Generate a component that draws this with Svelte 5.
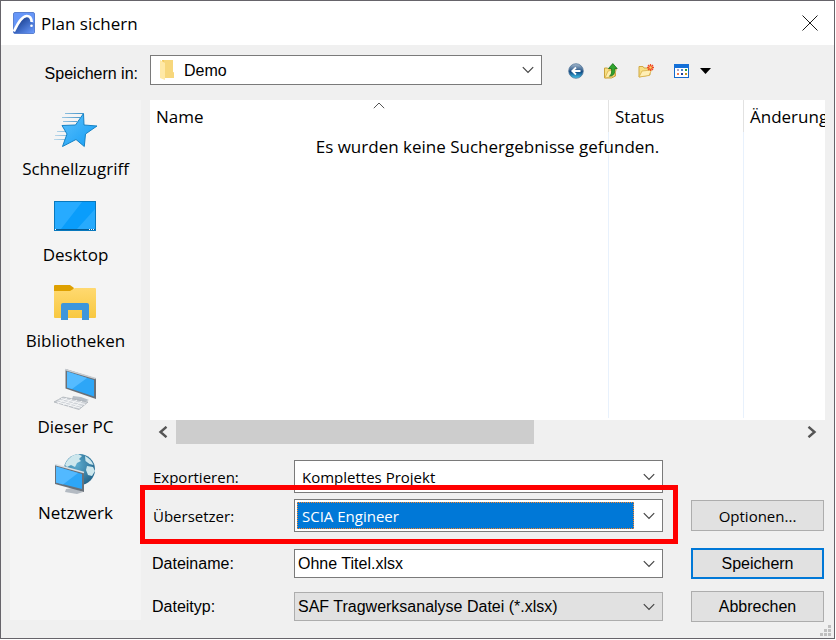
<script lang="ts">
    const places = [
        { id: "quick", label: "Schnellzugriff" },
        { id: "desktop", label: "Desktop" },
        { id: "libraries", label: "Bibliotheken" },
        { id: "pc", label: "Dieser PC" },
        { id: "network", label: "Netzwerk" },
    ];

    let fileName = $state("Ohne Titel.xlsx");

    // horizontal scroll extent of the file list
    const visibleWidth = 675;
    const contentWidth = 1175;
    const thumbWidth = $derived((visibleWidth / contentWidth) * 100);
</script>

{#snippet chevron()}
    <svg class="chevron" width="12" height="8" viewBox="0 0 12 8" aria-hidden="true">
        <path d="M.8 1.2 6 6.4l5.2-5.2" fill="none" stroke="#444" stroke-width="1.2" />
    </svg>
{/snippet}

<main class="dialog">
    <header class="titlebar">
        <svg width="22" height="22" viewBox="0 0 22 22" aria-hidden="true">
            <defs>
                <linearGradient id="logo" x1=".2" y1=".2" x2="1" y2="1">
                    <stop offset="0" stop-color="#1d3f8c" />
                    <stop offset=".35" stop-color="#3560b8" />
                    <stop offset="1" stop-color="#6c9cff" />
                </linearGradient>
            </defs>
            <rect x=".5" y=".5" width="21" height="21" rx="1.5" fill="#6696f8" stroke="#5a80d0" />
            <path d="M1 20C4 13 8 5 13.500 4.500c3.500 0 4.700 3 5 6L21 11v10H1z" fill="url(#logo)" />
            <path d="M.8 19.500C4 13 8 4.500 13.500 4c3.500-.2 5 3 5.200 6" fill="none" stroke="#fff" stroke-width="2.6" />
            <circle cx="18.500" cy="13.700" r="1.300" fill="#fff" />
        </svg>
        <h1>Plan sichern</h1>
        <button class="close" aria-label="Schließen">
            <svg width="16" height="16" viewBox="0 0 16 16">
                <path d="M.5.5l15 15M15.500.5l-15 15" stroke="#000" stroke-width=".9" />
            </svg>
        </button>
    </header>

    <div class="toolbar">
        <label class="arial" for="folder">Speichern in:</label>
        <div class="combo folder">
            <select id="folder" class="arial">
                <option>Demo</option>
            </select>
            <svg class="folder-icon" width="16" height="22" viewBox="0 0 16 22" aria-hidden="true">
                <path d="M3 1h11v12l1 1v5H3z" fill="#f3cb62" />
                <path d="M5 1h9v12l1 1v5H5z" fill="#f7d77c" />
                <path d="M1 1l5 3v17l-5-2z" fill="#ffe9a6" />
            </svg>
            {@render chevron()}
        </div>
        <div class="tools">
            <button aria-label="Zurück">
                <svg width="16" height="16" viewBox="0 0 16 16">
                    <defs>
                        <linearGradient id="orb" x1="0" y1="0" x2="0" y2="1">
                            <stop offset="0" stop-color="#a9bccf" />
                            <stop offset=".45" stop-color="#36618f" />
                            <stop offset=".55" stop-color="#0d4681" />
                            <stop offset="1" stop-color="#45c8ee" />
                        </linearGradient>
                    </defs>
                    <circle cx="8" cy="8" r="7.300" fill="url(#orb)" stroke="#54779b" stroke-width=".8" />
                    <path d="M12.500 8H5M8 4.500 4.300 8 8 11.500" fill="none" stroke="#fff" stroke-width="1.800" />
                </svg>
            </button>
            <button aria-label="Eine Ebene nach oben">
                <svg width="16" height="16" viewBox="0 0 16 16">
                    <path d="M1.500 5h3l1 1h7v7l-4 2h-7z" fill="#f7df83" stroke="#c9a23b" />
                    <path d="M2 15l3-7 8.500-2-2.500 7z" fill="#ffeeae" stroke="#d8b14a" stroke-width=".8" />
                    <path d="M6.500 13c2.500-1.500 2.300-4 2-7.500H5.500L9.800.6l4.400 4.900h-2.400c.3 4.500-1 7.500-5.300 7.500z" fill="#31a52e" stroke="#157016" stroke-width=".8" />
                </svg>
            </button>
            <button aria-label="Neuen Ordner erstellen">
                <svg width="16" height="16" viewBox="0 0 16 16">
                    <path d="M1 14V3.500h4l1 1.500h6v7z" fill="#f7df83" stroke="#d0a944" />
                    <path d="M1 14l3-6 9.500-1-2.500 5.500z" fill="#ffefb5" stroke="#d8b14a" stroke-width=".8" />
                    <path d="M12.500 1v7M9 4.500h7M10 2l5 5M15 2l-5 5" stroke="#ef4c25" stroke-width="1.300" />
                    <circle cx="12.500" cy="4.500" r="1.200" fill="#ffcf5c" />
                </svg>
            </button>
            <button aria-label="Ansichtsmenü">
                <svg width="38" height="16" viewBox="0 0 38 16">
                    <rect x="1.500" y="1.500" width="14" height="13" fill="#fff" stroke="#1168cd" />
                    <path d="M1 1h15v4H1z" fill="#1470d8" />
                    <path d="M4 6h2v2H4z" fill="#a8a3c5" />
                    <path d="M8 6h2v2H8z" fill="#4c83cc" />
                    <path d="M12 6h2v2h-2z" fill="#2d9a3a" />
                    <path d="M4 10h2v2H4z" fill="#f07a50" />
                    <path d="M8 10h2v2H8z" fill="#1c3f9a" />
                    <path d="M12 10h2v2h-2z" fill="#c4971e" />
                    <path d="M27 5h11l-5.500 6z" fill="#000" />
                </svg>
            </button>
        </div>
    </div>

    <div class="body">
        <nav class="places">
            {#each places as place}
                <button class="place">
                    <svg width="44" height="44" viewBox="1 0 44 44" aria-hidden="true">
                        {#if place.id === "quick"}
                            <defs>
                                <linearGradient id="star" x1="0" y1="0" x2="1" y2="1">
                                    <stop offset="0" stop-color="#5cc0fb" />
                                    <stop offset="1" stop-color="#139df5" />
                                </linearGradient>
                                <linearGradient id="trail" x1="0" y1="0" x2="30" y2="0" gradientUnits="userSpaceOnUse">
                                    <stop offset="0" stop-color="#c3dcec" />
                                    <stop offset="1" stop-color="#3f92c8" />
                                </linearGradient>
                            </defs>
                            <path d="M12 5.500h18M9 9.500h18M10 13.500h14M4 23.500h12M2 27.500h12M1 31.500h13" stroke="url(#trail)" />
                            <path d="M30.500 5.500 31 17l13 1-11.500 8-1.200 12.500-8.300-7L9.500 38.500l4.500-12.500-5-8.500 13.500-.5z" fill="url(#star)" stroke="#1682c5" />
                        {:else if place.id === "desktop"}
                            <rect x="1.500" y="7.500" width="41" height="29" fill="#0a9dfb" stroke="#0878bd" />
                            <path d="M2 8h27L8 35H2z" fill="#27abff" />
                            <path d="M42 15v20H24z" fill="#3bb3ff" opacity=".6" />
                            <path d="M2 35.500h40" stroke="#075c96" />
                            <path d="M2 35.500h1M36 35.500h1M38 35.500h1M40 35.500h1" stroke="#fff" />
                        {:else if place.id === "libraries"}
                            <defs>
                                <linearGradient id="lib" x1="0" y1="0" x2="0" y2="1">
                                    <stop offset="0" stop-color="#ffd970" />
                                    <stop offset="1" stop-color="#f8c840" />
                                </linearGradient>
                            </defs>
                            <path d="M1 6q0-1 1-1h15l4 3-2 4H1z" fill="#dea000" />
                            <path d="M1 11h16l5-3h20q1 0 1 1v28q0 1-1 1H2q-1 0-1-1z" fill="url(#lib)" />
                            <path d="M8 40V25q0-2 2-2h24q2 0 2 2v15h-7V30H15v10z" fill="#3d96dc" />
                        {:else if place.id === "pc"}
                            <path d="M20 30l8 1 8 3-5 2-12-3z" fill="#b7bec6" />
                            <path d="M12.500 3 43 12.500V33L12.500 22.500z" fill="#6a7077" />
                            <path d="M12 3.500 42.500 12.500" stroke="#c9ced3" stroke-width="1.500" />
                            <path d="M14 5.500l27 8.500v16.500L14 21.500z" fill="#2da6f7" />
                            <path d="M14 5.500l20 6.500-15 11-5-1.500z" fill="#55bbff" />
                            <path d="M10 31l25 5-9 7.500L1 36z" fill="#d0d4d9" stroke="#9ca2aa" stroke-width=".6" />
                            <path d="M8 32.500l24 6M5.500 34l23.500 6.500M4 36l23 6M14 32l-9 5.500M19 33l-9 6M24 34l-9 6.500M29 35l-8.500 6.500" stroke="#f7f8f9" stroke-width=".9" />
                        {:else}
                            <defs>
                                <radialGradient id="globe" cx=".4" cy=".35" r=".75">
                                    <stop offset="0" stop-color="#5cadd0" />
                                    <stop offset="1" stop-color="#1f5f85" />
                                </radialGradient>
                            </defs>
                            <circle cx="26.500" cy="17.500" r="15.500" fill="url(#globe)" />
                            <path d="M12 13c2-6 7-10 13-11l4 2-3 3 2 2-4 2-2 4-4-2-4 2zM32 4c4 2 7 5 8.500 9l-4-1-4-3zM34 14l6 1 2 4-3 5-4-1-2-5z" fill="#cde7ed" />
                            <path d="M13 37l7-1 10 4-6 2-12-2z" fill="#b3bac2" />
                            <path d="M2 12.500 31 20.500V40L2 32z" fill="#68717a" />
                            <path d="M2 12.500 31 20.500" stroke="#dbe0e4" stroke-width="1.500" />
                            <path d="M3 14.500l26 7.500v15L3 30.500z" fill="#2da6f7" />
                            <path d="M3 14.500l22 6.500L10 32.500l-7-2z" fill="#52b9ff" />
                        {/if}
                    </svg>
                    <span>{place.label}</span>
                </button>
            {/each}
        </nav>

        <div class="content">
            <div class="list">
                <table>
                    <thead>
                        <tr>
                            <th class="name">Name</th>
                            <th class="status">Status</th>
                            <th>Änderung</th>
                        </tr>
                    </thead>
                    <tbody>
                        <tr><td></td><td></td><td></td></tr>
                    </tbody>
                </table>
                <svg class="sort" width="12" height="7" viewBox="0 0 12 7" aria-hidden="true">
                    <path d="M.8 6.200 6 1l5.200 5.200" fill="none" stroke="#555" />
                </svg>
                <p class="empty">Es wurden keine Suchergebnisse gefunden.</p>
            </div>
            <div class="scrollbar">
                <button aria-label="Nach links">
                    <svg width="10" height="12" viewBox="0 0 10 12">
                        <path d="M8.500.8 2.500 6l6 5.200" fill="none" stroke="#555" stroke-width="2.400" />
                    </svg>
                </button>
                <div class="track">
                    <div class="thumb" style="width: {thumbWidth}%"></div>
                </div>
                <button aria-label="Nach rechts">
                    <svg width="10" height="12" viewBox="0 0 10 12">
                        <path d="M1.500.8l6 5.200-6 5.200" fill="none" stroke="#555" stroke-width="2.400" />
                    </svg>
                </button>
            </div>

            <form class="form" onsubmit={(e) => e.preventDefault()}>
                <div class="row">
                    <label for="scope">Exportieren:</label>
                    <div class="combo">
                        <select id="scope">
                            <option>Komplettes Projekt</option>
                        </select>
                        {@render chevron()}
                    </div>
                </div>
                <div class="row translator">
                    <label for="translator">Übersetzer:</label>
                    <div class="combo selected">
                        <select id="translator">
                            <option>SCIA Engineer</option>
                        </select>
                        {@render chevron()}
                    </div>
                    <button type="button" class="btn">Optionen...</button>
                    <div class="highlight"></div>
                </div>
                <div class="row file arial">
                    <label for="filename">Dateiname:</label>
                    <div class="combo">
                        <input id="filename" type="text" bind:value={fileName} />
                        {@render chevron()}
                    </div>
                    <button type="submit" class="btn primary">Speichern</button>
                </div>
                <div class="row file arial">
                    <label for="filetype">Dateityp:</label>
                    <div class="combo gray">
                        <select id="filetype">
                            <option>SAF Tragwerksanalyse Datei (*.xlsx)</option>
                        </select>
                        {@render chevron()}
                    </div>
                    <button type="button" class="btn">Abbrechen</button>
                </div>
            </form>
        </div>
    </div>

    <svg class="grip" width="12" height="12" viewBox="0 0 12 12" aria-hidden="true">
        <path d="M8 0h3v3H8zM4 4h3v3H4zM8 4h3v3H8zM0 8h3v3H0zM4 8h3v3H4zM8 8h3v3H8z" fill="#bfbfbf" />
    </svg>
</main>

<style>
    :global(body) {
        margin: 0;
        background: #fff;
    }

    .dialog {
        position: relative;
        box-sizing: border-box;
        margin: 0 1px 1px 0;
        padding-bottom: 16px;
        border: 1px solid #66646a;
        background: #f0f0f0;
        color: #000;
        font-family: "Open Sans", "Noto Sans", sans-serif;
        font-size: 15px;
    }

    button,
    select,
    input {
        margin: 0;
        padding: 0;
        border: 0;
        border-radius: 0;
        background: none;
        color: inherit;
        font: inherit;
    }

    svg {
        display: block;
        flex: none;
    }

    .titlebar {
        display: flex;
        align-items: center;
        height: 44px;
        padding: 0 16px 0 12px;
        background: #fff;
    }

    .titlebar h1 {
        flex: 1;
        margin: 0 0 0 6px;
        font-size: 17px;
        font-weight: 400;
    }

    .toolbar {
        display: flex;
        align-items: center;
        height: 50px;
        padding-bottom: 5px;
    }

    .toolbar > label {
        box-sizing: border-box;
        width: 149px;
        padding: 7px 12px 0 0;
        text-align: right;
    }

    .arial {
        font-family: "Liberation Sans", Arial, sans-serif;
        font-size: 16px;
    }

    .combo {
        display: grid;
        box-sizing: border-box;
        min-width: 0;
        height: 33px;
        border: 1px solid #7a7a7a;
        background: #fff;
    }

    .combo > * {
        grid-area: 1 / 1;
    }

    .combo select,
    .combo input {
        appearance: none;
        box-sizing: border-box;
        width: 100%;
        min-width: 0;
        height: 100%;
        padding: 0 28px 0 7px;
        outline: none;
    }

    .combo .chevron {
        place-self: center end;
        margin-right: 7px;
        pointer-events: none;
    }

    .combo.folder {
        flex: 1;
        height: 30px;
    }

    .combo.folder select {
        padding-left: 33px;
    }

    .folder-icon {
        place-self: center start;
        margin-left: 8px;
        pointer-events: none;
    }

    .combo.selected select {
        width: auto;
        height: auto;
        margin: 2px 28px 2px 2px;
        padding: 0 0 0 4px;
        border: 1px dotted #ff8728;
        background: #0078d7;
        color: #fff;
    }

    .combo.gray {
        border-color: #adadad;
        background: #e1e1e1;
    }

    .tools {
        display: flex;
        align-items: center;
        gap: 19px;
        width: 266px;
        padding: 2px 0 0 26px;
    }

    .body {
        display: flex;
        gap: 9px;
        padding: 0 9px;
    }

    .places {
        display: flex;
        flex: none;
        flex-direction: column;
        gap: 13px;
        box-sizing: border-box;
        width: 131px;
        margin-bottom: 2px;
        padding-top: 8px;
        background: #f4f4f4;
    }

    .place {
        display: flex;
        flex-direction: column;
        align-items: center;
        gap: 5px;
        font-size: 17px;
        line-height: 24px;
    }

    .content {
        flex: 1;
        min-width: 0;
    }

    .list {
        position: relative;
        height: 320px;
        overflow: hidden;
        background: #fff;
    }

    table {
        width: 100%;
        border-collapse: separate;
        border-spacing: 0;
        table-layout: fixed;
    }

    th {
        box-sizing: border-box;
        height: 32px;
        padding: 0 0 0 6px;
        border-right: 1px solid #e2e2e2;
        overflow: hidden;
        font-size: 17px;
        font-weight: 400;
        text-align: left;
        white-space: nowrap;
    }

    th.name {
        width: 459px;
    }

    th.status {
        width: 135px;
    }

    td {
        height: 286px;
        padding: 0;
        border-right: 1px solid #e8f1fc;
    }

    th:last-child,
    td:last-child {
        border-right: 0;
    }

    .sort {
        position: absolute;
        top: 2px;
        left: 223px;
    }

    .empty {
        position: absolute;
        top: 35px;
        left: 0;
        width: 100%;
        margin: 0;
        font-size: 17px;
        line-height: 24px;
        text-align: center;
    }

    .scrollbar {
        display: flex;
        height: 24px;
    }

    .scrollbar button {
        display: grid;
        place-items: center;
        width: 26px;
    }

    .track {
        flex: 1;
    }

    .thumb {
        height: 100%;
        background: #cdcdcd;
    }

    .form {
        display: flex;
        flex-direction: column;
        padding: 16px 1px 0 0;
    }

    .row {
        position: relative;
        display: grid;
        grid-template-columns: 116px minmax(0, 1fr) 133px;
        column-gap: 28px;
        align-items: center;
    }

    .row label {
        padding-left: 3px;
    }

    .translator {
        margin: 6px 0 16px;
    }

    .file + .file {
        margin-top: 12px;
    }

    .file label {
        padding-left: 2px;
    }

    .file .combo {
        height: 29px;
    }

    .file .combo select,
    .file .combo input {
        padding-left: 3px;
    }

    .btn {
        box-sizing: border-box;
        height: 31px;
        border: 1px solid #adadad;
        background: #e1e1e1;
    }

    .btn.primary {
        border: 2px solid #0078d7;
    }

    .highlight {
        position: absolute;
        inset: -14px 146px -12px -10px;
        border: 5px solid #f00;
        pointer-events: none;
    }

    .grip {
        position: absolute;
        right: 2px;
        bottom: 1px;
    }
</style>
